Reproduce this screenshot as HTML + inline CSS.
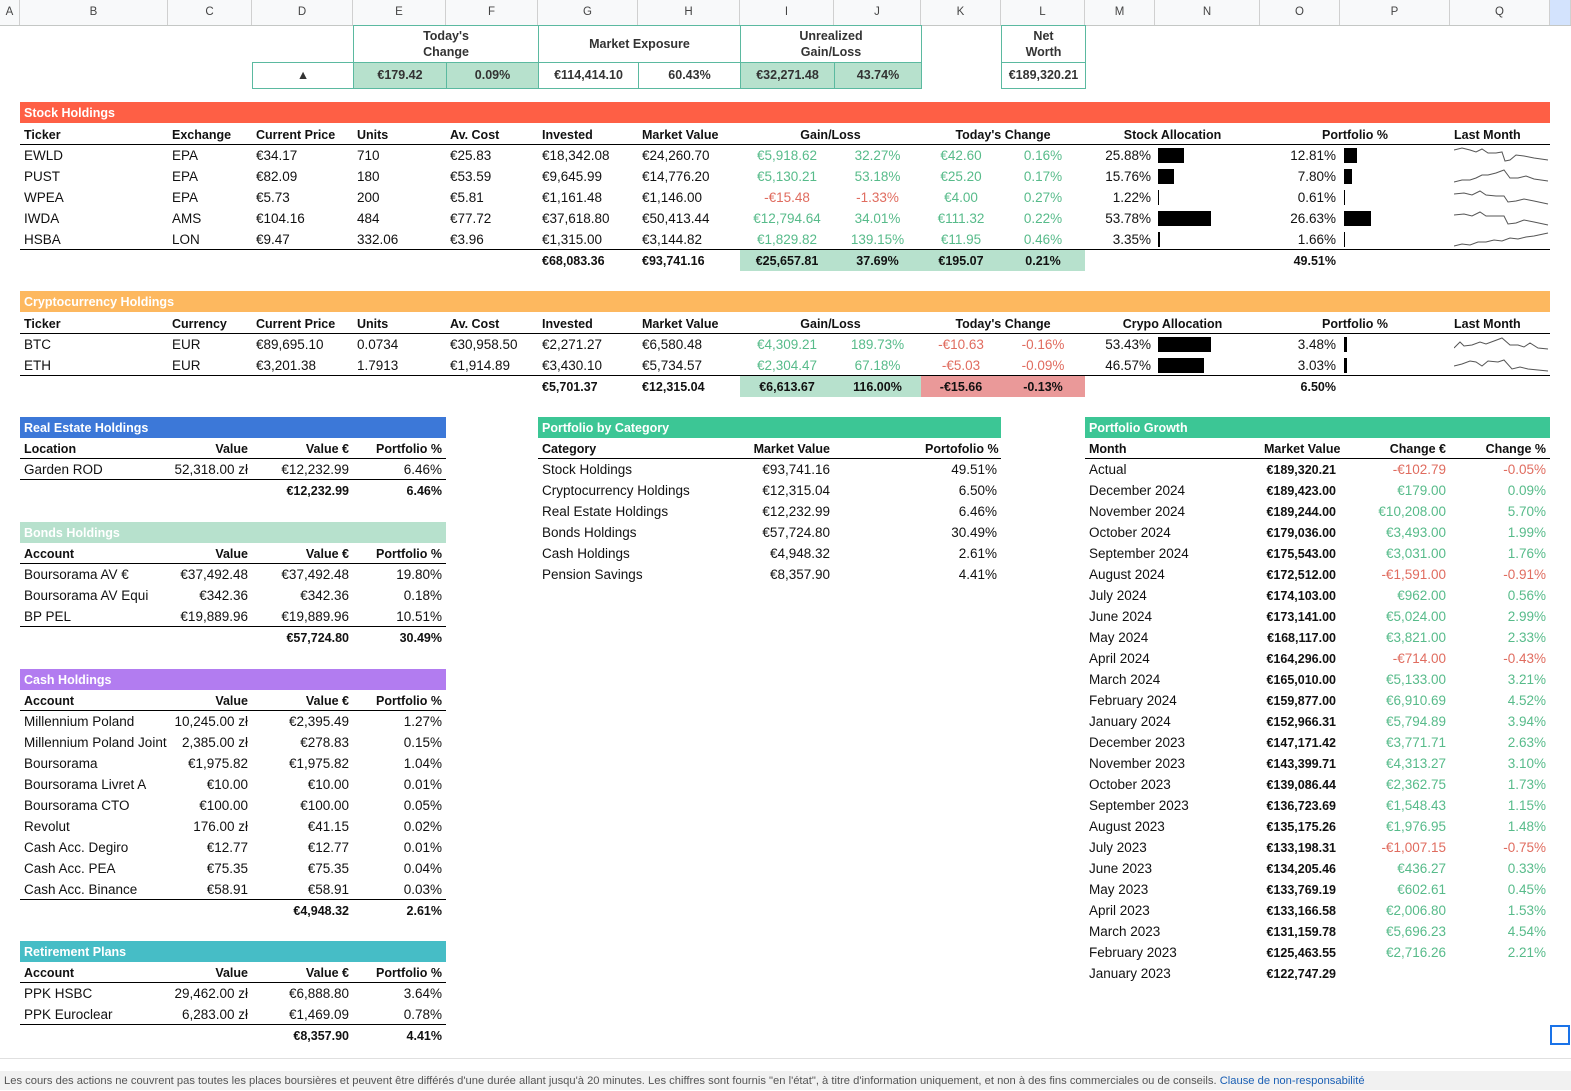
<!DOCTYPE html>
<html><head><meta charset="utf-8"><style>
*{margin:0;padding:0}
body{width:1571px;height:1090px;position:relative;background:#fff;font-family:"Liberation Sans",Arial,sans-serif;font-size:13.5px;color:#111;overflow:hidden}
.hd{position:absolute;top:0;left:0;width:1571px;height:25px;background:#f8f9fa;border-bottom:1px solid #c4c7c5}
.hd span{position:absolute;top:0;height:25px;line-height:25px;text-align:center;color:#444;font-size:11.5px;border-right:1px solid #d0d0d0;box-sizing:border-box}
.w{position:absolute;left:0;width:1571px;height:21px}
.x{position:absolute;top:0;height:21px;line-height:22px;padding:0 4px;box-sizing:border-box;white-space:nowrap}
.r{text-align:right}.c{text-align:center}.bd{font-weight:bold;font-size:12.5px}
.gn{color:#57bb8a}.rd{color:#e06c5f}
.B{left:20px;width:148px}.C{left:168px;width:84px}.D{left:252px;width:101px}.E{left:353px;width:93px}.F{left:446px;width:92px}.G{left:538px;width:100px}.H{left:638px;width:102px}.I{left:740px;width:94px}.J{left:834px;width:87px}.K{left:921px;width:80px}.L{left:1001px;width:84px}.M{left:1085px;width:70px}.O{left:1260px;width:80px}.Q{left:1450px;width:100px}
.bar{position:absolute;height:21px;line-height:22px;color:#fff;font-weight:bold;font-size:12.5px;padding-left:4px;box-sizing:border-box}
.ln{position:absolute;height:1px;background:#000}
.gb{background:#b7e1cd}.rb{background:#ea9999}
.ab{position:absolute;top:3px;height:15px;background:#000}
.sp{position:absolute;top:2px;left:1454px}
.sum{position:absolute;border:1px solid #5bb9a0;box-sizing:border-box;text-align:center;font-weight:bold;color:#333;line-height:16px;font-size:12.5px}
</style></head><body>
<div class="hd">
<span style="left:0;width:20px">A</span><span style="left:20px;width:148px">B</span><span style="left:168px;width:84px">C</span><span style="left:252px;width:101px">D</span><span style="left:353px;width:93px">E</span><span style="left:446px;width:92px">F</span><span style="left:538px;width:100px">G</span><span style="left:638px;width:102px">H</span><span style="left:740px;width:94px">I</span><span style="left:834px;width:87px">J</span><span style="left:921px;width:80px">K</span><span style="left:1001px;width:84px">L</span><span style="left:1085px;width:70px">M</span><span style="left:1155px;width:105px">N</span><span style="left:1260px;width:80px">O</span><span style="left:1340px;width:110px">P</span><span style="left:1450px;width:100px">Q</span><span style="left:1550px;width:21px;background:#d3e3fd"></span>
</div>

<div class="sum" style="left:353px;top:25px;width:186px;height:38px;padding-top:2px">Today's<br>Change</div>
<div class="sum" style="left:538px;top:25px;width:203px;height:38px;line-height:36px">Market Exposure</div>
<div class="sum" style="left:740px;top:25px;width:182px;height:38px;padding-top:2px">Unrealized<br>Gain/Loss</div>
<div class="sum" style="left:1001px;top:25px;width:85px;height:38px;padding-top:2px">Net<br>Worth</div>
<div class="sum" style="left:252px;top:62px;width:102px;height:27px;line-height:25px">▲</div>
<div class="sum gb" style="left:353px;top:62px;width:94px;height:27px;line-height:25px">€179.42</div>
<div class="sum gb" style="left:446px;top:62px;width:93px;height:27px;line-height:25px">0.09%</div>
<div class="sum" style="left:538px;top:62px;width:101px;height:27px;line-height:25px">€114,414.10</div>
<div class="sum" style="left:638px;top:62px;width:103px;height:27px;line-height:25px">60.43%</div>
<div class="sum gb" style="left:740px;top:62px;width:95px;height:27px;line-height:25px">€32,271.48</div>
<div class="sum gb" style="left:834px;top:62px;width:88px;height:27px;line-height:25px">43.74%</div>
<div class="sum" style="left:1001px;top:62px;width:85px;height:27px;line-height:25px">€189,320.21</div>

<div class="bar" style="left:20px;top:102px;width:1530px;background:#fe5f45">Stock Holdings</div>
<div class="w bd" style="top:124px"><span class="x B">Ticker</span><span class="x C">Exchange</span><span class="x D">Current Price</span><span class="x E">Units</span><span class="x F">Av. Cost</span><span class="x G">Invested</span><span class="x H">Market Value</span><span class="x c" style="left:740px;width:181px">Gain/Loss</span><span class="x c" style="left:921px;width:164px">Today's Change</span><span class="x c" style="left:1085px;width:175px">Stock Allocation</span><span class="x c" style="left:1260px;width:190px">Portfolio %</span><span class="x Q">Last Month</span></div>
<div class="ln" style="left:20px;top:144px;width:1530px"></div>
<div class="w" style="top:145px"><span class="x B">EWLD</span><span class="x C">EPA</span><span class="x D">€34.17</span><span class="x E">710</span><span class="x F">€25.83</span><span class="x G">€18,342.08</span><span class="x H">€24,260.70</span><span class="x I c gn">€5,918.62</span><span class="x J c gn">32.27%</span><span class="x K c gn">€42.60</span><span class="x L c gn">0.16%</span><span class="x M r">25.88%</span><span class="ab" style="left:1158px;width:26px"></span><span class="x O r">12.81%</span><span class="ab" style="left:1344px;width:13px"></span><svg class="sp" width="96" height="17"><polyline fill="none" stroke="#555" points="0,3 8,1 16,3 22,5 28,2 34,6 42,6 48,5 51,14 56,13 62,8 70,9 80,11 94,13"/></svg></div>
<div class="w" style="top:166px"><span class="x B">PUST</span><span class="x C">EPA</span><span class="x D">€82.09</span><span class="x E">180</span><span class="x F">€53.59</span><span class="x G">€9,645.99</span><span class="x H">€14,776.20</span><span class="x I c gn">€5,130.21</span><span class="x J c gn">53.18%</span><span class="x K c gn">€25.20</span><span class="x L c gn">0.17%</span><span class="x M r">15.76%</span><span class="ab" style="left:1158px;width:16px"></span><span class="x O r">7.80%</span><span class="ab" style="left:1344px;width:8px"></span><svg class="sp" width="96" height="17"><polyline fill="none" stroke="#555" points="0,14 8,12 16,12 22,10 28,7 34,7 42,5 50,2 56,10 64,10 72,8 80,11 94,13"/></svg></div>
<div class="w" style="top:187px"><span class="x B">WPEA</span><span class="x C">EPA</span><span class="x D">€5.73</span><span class="x E">200</span><span class="x F">€5.81</span><span class="x G">€1,161.48</span><span class="x H">€1,146.00</span><span class="x I c rd">-€15.48</span><span class="x J c rd">-1.33%</span><span class="x K c gn">€4.00</span><span class="x L c gn">0.27%</span><span class="x M r">1.22%</span><span class="ab" style="left:1158px;width:1px"></span><span class="x O r">0.61%</span><span class="ab" style="left:1344px;width:1px"></span><svg class="sp" width="96" height="17"><polyline fill="none" stroke="#555" points="0,5 10,4 18,6 26,2 32,6 42,7 50,7 54,13 62,12 70,10 80,12 94,15"/></svg></div>
<div class="w" style="top:208px"><span class="x B">IWDA</span><span class="x C">AMS</span><span class="x D">€104.16</span><span class="x E">484</span><span class="x F">€77.72</span><span class="x G">€37,618.80</span><span class="x H">€50,413.44</span><span class="x I c gn">€12,794.64</span><span class="x J c gn">34.01%</span><span class="x K c gn">€111.32</span><span class="x L c gn">0.22%</span><span class="x M r">53.78%</span><span class="ab" style="left:1158px;width:53px"></span><span class="x O r">26.63%</span><span class="ab" style="left:1344px;width:27px"></span><svg class="sp" width="96" height="17"><polyline fill="none" stroke="#555" points="0,5 10,4 18,6 26,2 32,6 42,6 50,6 54,14 62,13 70,10 80,12 94,15"/></svg></div>
<div class="w" style="top:229px"><span class="x B">HSBA</span><span class="x C">LON</span><span class="x D">€9.47</span><span class="x E">332.06</span><span class="x F">€3.96</span><span class="x G">€1,315.00</span><span class="x H">€3,144.82</span><span class="x I c gn">€1,829.82</span><span class="x J c gn">139.15%</span><span class="x K c gn">€11.95</span><span class="x L c gn">0.46%</span><span class="x M r">3.35%</span><span class="ab" style="left:1158px;width:2px"></span><span class="x O r">1.66%</span><span class="ab" style="left:1344px;width:1px"></span><svg class="sp" width="96" height="17"><polyline fill="none" stroke="#555" points="0,15 8,13 16,14 24,11 32,11 40,9 48,10 56,7 64,8 72,6 80,5 94,2"/></svg></div>
<div class="ln" style="left:20px;top:249px;width:1530px"></div>
<div class="w bd" style="top:250px"><span class="x G">€68,083.36</span><span class="x H">€93,741.16</span><span class="x I c gb">€25,657.81</span><span class="x J c gb">37.69%</span><span class="x K c gb">€195.07</span><span class="x L c gb">0.21%</span><span class="x O r">49.51%</span></div>

<div class="bar" style="left:20px;top:291px;width:1530px;background:#fdb85f">Cryptocurrency Holdings</div>
<div class="w bd" style="top:313px"><span class="x B">Ticker</span><span class="x C">Currency</span><span class="x D">Current Price</span><span class="x E">Units</span><span class="x F">Av. Cost</span><span class="x G">Invested</span><span class="x H">Market Value</span><span class="x c" style="left:740px;width:181px">Gain/Loss</span><span class="x c" style="left:921px;width:164px">Today's Change</span><span class="x c" style="left:1085px;width:175px">Crypo Allocation</span><span class="x c" style="left:1260px;width:190px">Portfolio %</span><span class="x Q">Last Month</span></div>
<div class="ln" style="left:20px;top:333px;width:1530px"></div>
<div class="w" style="top:334px"><span class="x B">BTC</span><span class="x C">EUR</span><span class="x D">€89,695.10</span><span class="x E">0.0734</span><span class="x F">€30,958.50</span><span class="x G">€2,271.27</span><span class="x H">€6,580.48</span><span class="x I c gn">€4,309.21</span><span class="x J c gn">189.73%</span><span class="x K c rd">-€10.63</span><span class="x L c rd">-0.16%</span><span class="x M r">53.43%</span><span class="ab" style="left:1158px;width:53px"></span><span class="x O r">3.48%</span><span class="ab" style="left:1344px;width:3px"></span><svg class="sp" width="96" height="17"><polyline fill="none" stroke="#555" points="0,12 6,6 10,10 18,9 26,6 32,8 40,5 48,2 56,9 64,9 70,11 76,7 84,12 94,13"/></svg></div>
<div class="w" style="top:355px"><span class="x B">ETH</span><span class="x C">EUR</span><span class="x D">€3,201.38</span><span class="x E">1.7913</span><span class="x F">€1,914.89</span><span class="x G">€3,430.10</span><span class="x H">€5,734.57</span><span class="x I c gn">€2,304.47</span><span class="x J c gn">67.18%</span><span class="x K c rd">-€5.03</span><span class="x L c rd">-0.09%</span><span class="x M r">46.57%</span><span class="ab" style="left:1158px;width:46px"></span><span class="x O r">3.03%</span><span class="ab" style="left:1344px;width:3px"></span><svg class="sp" width="96" height="17"><polyline fill="none" stroke="#555" points="0,9 8,7 16,4 22,5 28,9 34,4 44,5 50,3 58,12 66,10 74,12 84,13 94,14"/></svg></div>
<div class="ln" style="left:20px;top:375px;width:1530px"></div>
<div class="w bd" style="top:376px"><span class="x G">€5,701.37</span><span class="x H">€12,315.04</span><span class="x I c gb">€6,613.67</span><span class="x J c gb">116.00%</span><span class="x K c rb">-€15.66</span><span class="x L c rb">-0.13%</span><span class="x O r">6.50%</span></div>

<div class="bar" style="left:20px;top:417px;width:426px;background:#3c78d8">Real Estate Holdings</div>
<div class="w bd" style="top:438px"><span class="x B">Location</span><span class="x C r">Value</span><span class="x D r">Value €</span><span class="x E r">Portfolio %</span></div>
<div class="ln" style="left:20px;top:458px;width:426px"></div>
<div class="w" style="top:459px"><span class="x B">Garden ROD</span><span class="x C r">52,318.00 zł</span><span class="x D r">€12,232.99</span><span class="x E r">6.46%</span></div>
<div class="ln" style="left:20px;top:479px;width:426px"></div>
<div class="w bd" style="top:480px"><span class="x D r">€12,232.99</span><span class="x E r">6.46%</span></div>

<div class="bar" style="left:20px;top:522px;width:426px;background:#b7e1cd">Bonds Holdings</div>
<div class="w bd" style="top:543px"><span class="x B">Account</span><span class="x C r">Value</span><span class="x D r">Value €</span><span class="x E r">Portfolio %</span></div>
<div class="ln" style="left:20px;top:563px;width:426px"></div>
<div class="w" style="top:564px"><span class="x B">Boursorama AV €</span><span class="x C r">€37,492.48</span><span class="x D r">€37,492.48</span><span class="x E r">19.80%</span></div>
<div class="w" style="top:585px"><span class="x B">Boursorama AV Equi</span><span class="x C r">€342.36</span><span class="x D r">€342.36</span><span class="x E r">0.18%</span></div>
<div class="w" style="top:606px"><span class="x B">BP PEL</span><span class="x C r">€19,889.96</span><span class="x D r">€19,889.96</span><span class="x E r">10.51%</span></div>
<div class="ln" style="left:20px;top:626px;width:426px"></div>
<div class="w bd" style="top:627px"><span class="x D r">€57,724.80</span><span class="x E r">30.49%</span></div>

<div class="bar" style="left:20px;top:669px;width:426px;background:#b27cf0">Cash Holdings</div>
<div class="w bd" style="top:690px"><span class="x B">Account</span><span class="x C r">Value</span><span class="x D r">Value €</span><span class="x E r">Portfolio %</span></div>
<div class="ln" style="left:20px;top:710px;width:426px"></div>
<div class="w" style="top:711px"><span class="x B">Millennium Poland</span><span class="x C r">10,245.00 zł</span><span class="x D r">€2,395.49</span><span class="x E r">1.27%</span></div>
<div class="w" style="top:732px"><span class="x B">Millennium Poland Joint</span><span class="x C r">2,385.00 zł</span><span class="x D r">€278.83</span><span class="x E r">0.15%</span></div>
<div class="w" style="top:753px"><span class="x B">Boursorama</span><span class="x C r">€1,975.82</span><span class="x D r">€1,975.82</span><span class="x E r">1.04%</span></div>
<div class="w" style="top:774px"><span class="x B">Boursorama Livret A</span><span class="x C r">€10.00</span><span class="x D r">€10.00</span><span class="x E r">0.01%</span></div>
<div class="w" style="top:795px"><span class="x B">Boursorama CTO</span><span class="x C r">€100.00</span><span class="x D r">€100.00</span><span class="x E r">0.05%</span></div>
<div class="w" style="top:816px"><span class="x B">Revolut</span><span class="x C r">176.00 zł</span><span class="x D r">€41.15</span><span class="x E r">0.02%</span></div>
<div class="w" style="top:837px"><span class="x B">Cash Acc. Degiro</span><span class="x C r">€12.77</span><span class="x D r">€12.77</span><span class="x E r">0.01%</span></div>
<div class="w" style="top:858px"><span class="x B">Cash Acc. PEA</span><span class="x C r">€75.35</span><span class="x D r">€75.35</span><span class="x E r">0.04%</span></div>
<div class="w" style="top:879px"><span class="x B">Cash Acc. Binance</span><span class="x C r">€58.91</span><span class="x D r">€58.91</span><span class="x E r">0.03%</span></div>
<div class="ln" style="left:20px;top:899px;width:426px"></div>
<div class="w bd" style="top:900px"><span class="x D r">€4,948.32</span><span class="x E r">2.61%</span></div>

<div class="bar" style="left:20px;top:941px;width:426px;background:#46bdc6">Retirement Plans</div>
<div class="w bd" style="top:962px"><span class="x B">Account</span><span class="x C r">Value</span><span class="x D r">Value €</span><span class="x E r">Portfolio %</span></div>
<div class="ln" style="left:20px;top:982px;width:426px"></div>
<div class="w" style="top:983px"><span class="x B">PPK HSBC</span><span class="x C r">29,462.00 zł</span><span class="x D r">€6,888.80</span><span class="x E r">3.64%</span></div>
<div class="w" style="top:1004px"><span class="x B">PPK Euroclear</span><span class="x C r">6,283.00 zł</span><span class="x D r">€1,469.09</span><span class="x E r">0.78%</span></div>
<div class="ln" style="left:20px;top:1024px;width:426px"></div>
<div class="w bd" style="top:1025px"><span class="x D r">€8,357.90</span><span class="x E r">4.41%</span></div>

<div class="bar" style="left:538px;top:417px;width:463px;background:#3cc695">Portfolio by Category</div>
<div class="w bd" style="top:438px"><span class="x G">Category</span><span class="x I r">Market Value</span><span class="x K r">Portofolio %</span></div>
<div class="ln" style="left:538px;top:458px;width:463px"></div>
<div class="w" style="top:459px"><span class="x G">Stock Holdings</span><span class="x I r">€93,741.16</span><span class="x K r">49.51%</span></div>
<div class="w" style="top:480px"><span class="x G">Cryptocurrency Holdings</span><span class="x I r">€12,315.04</span><span class="x K r">6.50%</span></div>
<div class="w" style="top:501px"><span class="x G">Real Estate Holdings</span><span class="x I r">€12,232.99</span><span class="x K r">6.46%</span></div>
<div class="w" style="top:522px"><span class="x G">Bonds Holdings</span><span class="x I r">€57,724.80</span><span class="x K r">30.49%</span></div>
<div class="w" style="top:543px"><span class="x G">Cash Holdings</span><span class="x I r">€4,948.32</span><span class="x K r">2.61%</span></div>
<div class="w" style="top:564px"><span class="x G">Pension Savings</span><span class="x I r">€8,357.90</span><span class="x K r">4.41%</span></div>

<div class="bar" style="left:1085px;top:417px;width:465px;background:#3cc695">Portfolio Growth</div>
<div class="w bd" style="top:438px"><span class="x M">Month</span><span class="x O r">Market Value</span><span class="x r" style="left:1340px;width:110px">Change €</span><span class="x Q r">Change %</span></div>
<div class="ln" style="left:1085px;top:458px;width:465px"></div>
<div class="w" style="top:459px"><span class="x M">Actual</span><span class="x O r bd">€189,320.21</span><span class="x r rd" style="left:1340px;width:110px">-€102.79</span><span class="x Q r rd">-0.05%</span></div>
<div class="w" style="top:480px"><span class="x M">December 2024</span><span class="x O r bd">€189,423.00</span><span class="x r gn" style="left:1340px;width:110px">€179.00</span><span class="x Q r gn">0.09%</span></div>
<div class="w" style="top:501px"><span class="x M">November 2024</span><span class="x O r bd">€189,244.00</span><span class="x r gn" style="left:1340px;width:110px">€10,208.00</span><span class="x Q r gn">5.70%</span></div>
<div class="w" style="top:522px"><span class="x M">October 2024</span><span class="x O r bd">€179,036.00</span><span class="x r gn" style="left:1340px;width:110px">€3,493.00</span><span class="x Q r gn">1.99%</span></div>
<div class="w" style="top:543px"><span class="x M">September 2024</span><span class="x O r bd">€175,543.00</span><span class="x r gn" style="left:1340px;width:110px">€3,031.00</span><span class="x Q r gn">1.76%</span></div>
<div class="w" style="top:564px"><span class="x M">August 2024</span><span class="x O r bd">€172,512.00</span><span class="x r rd" style="left:1340px;width:110px">-€1,591.00</span><span class="x Q r rd">-0.91%</span></div>
<div class="w" style="top:585px"><span class="x M">July 2024</span><span class="x O r bd">€174,103.00</span><span class="x r gn" style="left:1340px;width:110px">€962.00</span><span class="x Q r gn">0.56%</span></div>
<div class="w" style="top:606px"><span class="x M">June 2024</span><span class="x O r bd">€173,141.00</span><span class="x r gn" style="left:1340px;width:110px">€5,024.00</span><span class="x Q r gn">2.99%</span></div>
<div class="w" style="top:627px"><span class="x M">May 2024</span><span class="x O r bd">€168,117.00</span><span class="x r gn" style="left:1340px;width:110px">€3,821.00</span><span class="x Q r gn">2.33%</span></div>
<div class="w" style="top:648px"><span class="x M">April 2024</span><span class="x O r bd">€164,296.00</span><span class="x r rd" style="left:1340px;width:110px">-€714.00</span><span class="x Q r rd">-0.43%</span></div>
<div class="w" style="top:669px"><span class="x M">March 2024</span><span class="x O r bd">€165,010.00</span><span class="x r gn" style="left:1340px;width:110px">€5,133.00</span><span class="x Q r gn">3.21%</span></div>
<div class="w" style="top:690px"><span class="x M">February 2024</span><span class="x O r bd">€159,877.00</span><span class="x r gn" style="left:1340px;width:110px">€6,910.69</span><span class="x Q r gn">4.52%</span></div>
<div class="w" style="top:711px"><span class="x M">January 2024</span><span class="x O r bd">€152,966.31</span><span class="x r gn" style="left:1340px;width:110px">€5,794.89</span><span class="x Q r gn">3.94%</span></div>
<div class="w" style="top:732px"><span class="x M">December 2023</span><span class="x O r bd">€147,171.42</span><span class="x r gn" style="left:1340px;width:110px">€3,771.71</span><span class="x Q r gn">2.63%</span></div>
<div class="w" style="top:753px"><span class="x M">November 2023</span><span class="x O r bd">€143,399.71</span><span class="x r gn" style="left:1340px;width:110px">€4,313.27</span><span class="x Q r gn">3.10%</span></div>
<div class="w" style="top:774px"><span class="x M">October 2023</span><span class="x O r bd">€139,086.44</span><span class="x r gn" style="left:1340px;width:110px">€2,362.75</span><span class="x Q r gn">1.73%</span></div>
<div class="w" style="top:795px"><span class="x M">September 2023</span><span class="x O r bd">€136,723.69</span><span class="x r gn" style="left:1340px;width:110px">€1,548.43</span><span class="x Q r gn">1.15%</span></div>
<div class="w" style="top:816px"><span class="x M">August 2023</span><span class="x O r bd">€135,175.26</span><span class="x r gn" style="left:1340px;width:110px">€1,976.95</span><span class="x Q r gn">1.48%</span></div>
<div class="w" style="top:837px"><span class="x M">July 2023</span><span class="x O r bd">€133,198.31</span><span class="x r rd" style="left:1340px;width:110px">-€1,007.15</span><span class="x Q r rd">-0.75%</span></div>
<div class="w" style="top:858px"><span class="x M">June 2023</span><span class="x O r bd">€134,205.46</span><span class="x r gn" style="left:1340px;width:110px">€436.27</span><span class="x Q r gn">0.33%</span></div>
<div class="w" style="top:879px"><span class="x M">May 2023</span><span class="x O r bd">€133,769.19</span><span class="x r gn" style="left:1340px;width:110px">€602.61</span><span class="x Q r gn">0.45%</span></div>
<div class="w" style="top:900px"><span class="x M">April 2023</span><span class="x O r bd">€133,166.58</span><span class="x r gn" style="left:1340px;width:110px">€2,006.80</span><span class="x Q r gn">1.53%</span></div>
<div class="w" style="top:921px"><span class="x M">March 2023</span><span class="x O r bd">€131,159.78</span><span class="x r gn" style="left:1340px;width:110px">€5,696.23</span><span class="x Q r gn">4.54%</span></div>
<div class="w" style="top:942px"><span class="x M">February 2023</span><span class="x O r bd">€125,463.55</span><span class="x r gn" style="left:1340px;width:110px">€2,716.26</span><span class="x Q r gn">2.21%</span></div>
<div class="w" style="top:963px"><span class="x M">January 2023</span><span class="x O r bd">€122,747.29</span></div>

<div style="position:absolute;left:1550px;top:1025px;width:20px;height:20px;border:2px solid #1a73e8;box-sizing:border-box"></div>
<div style="position:absolute;left:0;top:1058px;width:1571px;height:1px;background:#e0e0e0"></div>
<div style="position:absolute;left:0;top:1071px;width:1571px;height:19px;background:#f1f1f1;font-size:11.2px;line-height:20px;color:#555;padding-left:4px;white-space:nowrap">Les cours des actions ne couvrent pas toutes les places boursières et peuvent être différés d'une durée allant jusqu'à 20 minutes. Les chiffres sont fournis "en l'état", à titre d'information uniquement, et non à des fins commerciales ou de conseils. <span style="color:#1a5fb4">Clause de non-responsabilité</span></div>
</body></html>
